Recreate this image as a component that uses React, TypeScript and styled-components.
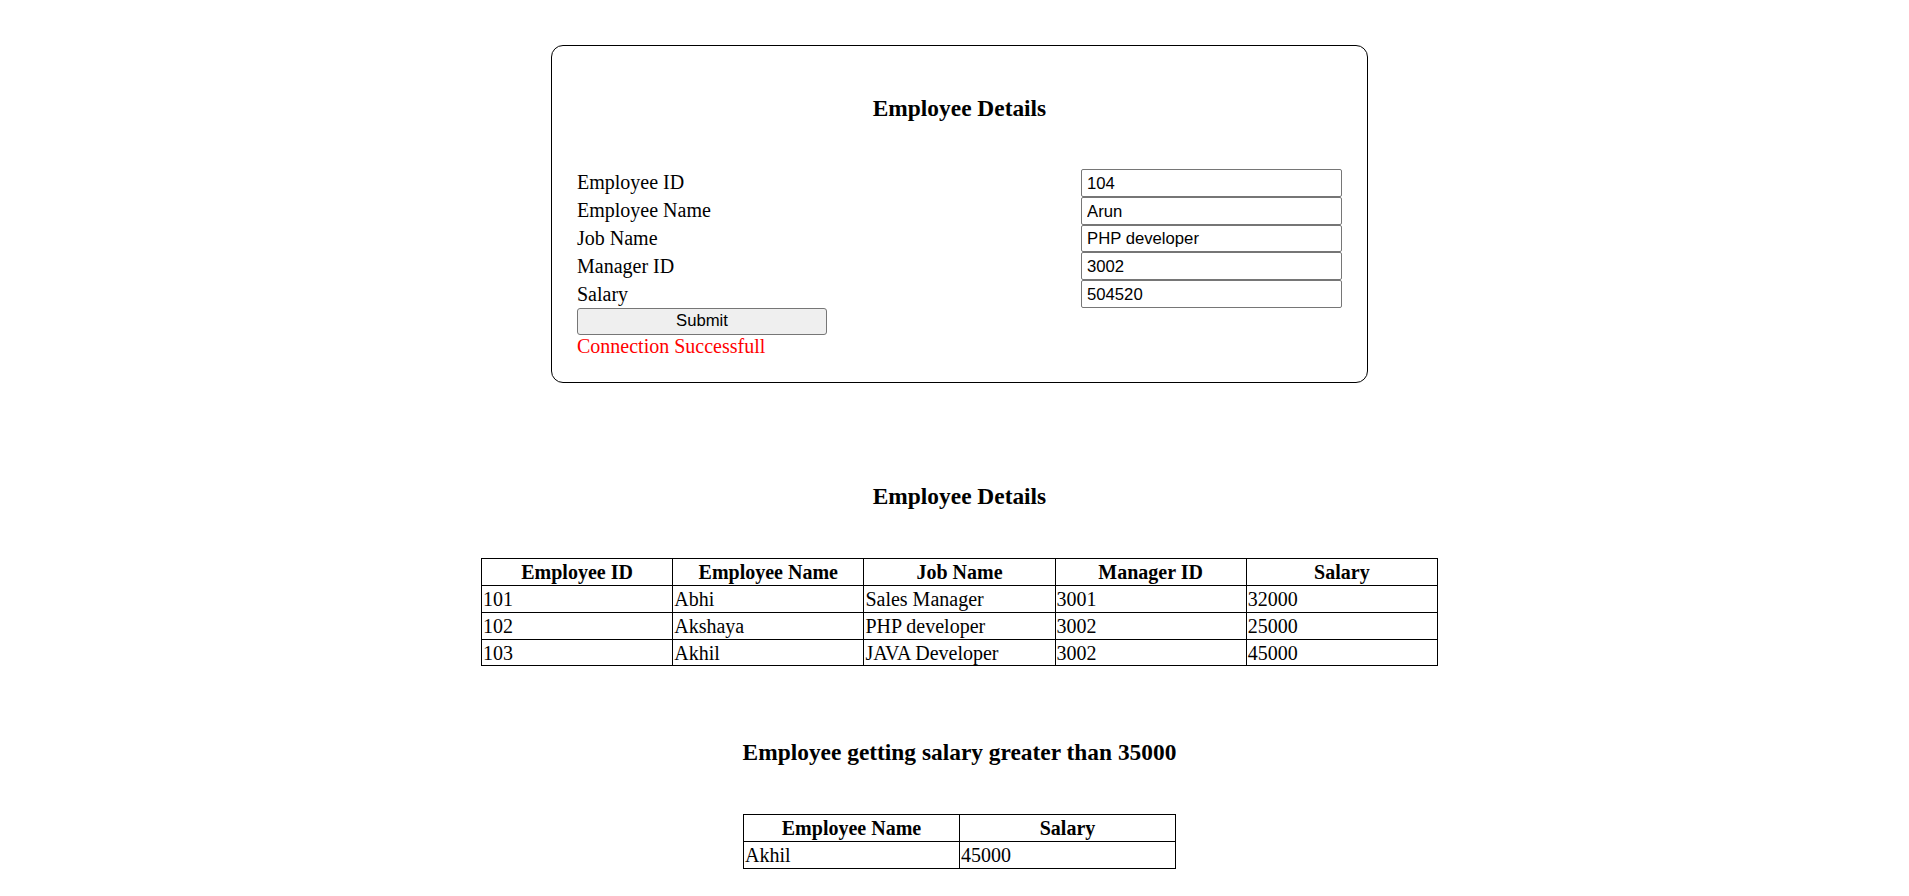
import styled, { createGlobalStyle } from "styled-components";

const GlobalStyle = createGlobalStyle`
  body {
    margin: 0;
    background: #ffffff;
    color: #000000;
    font-family: "Liberation Serif", "Times New Roman", serif;
    font-size: 20px;
  }
`;

const Page = styled.div`
  padding: 45px 0 20px 10px;
  display: flex;
  flex-direction: column;
  align-items: center;
`;

const Card = styled.form`
  box-sizing: border-box;
  width: 817px;
  border: 1px solid #000;
  border-radius: 12px;
  padding: 25px 25px 24px;
`;

const Heading = styled.h3<{ $top: number; $bottom: number }>`
  margin: ${(p) => p.$top}px 0 ${(p) => p.$bottom}px;
  font-size: 23.4px;
  line-height: 27px;
  font-weight: bold;
  text-align: center;
`;

const FieldGrid = styled.div`
  display: grid;
  grid-template-columns: 1fr 261px;
  align-items: center;
`;

const Label = styled.label`
  line-height: 23px;
`;

const Input = styled.input`
  box-sizing: border-box;
  width: 261px;
  height: 27.8px;
  margin: 0;
  padding: 2px 4px 0 5px;
  border: 1px solid #767676;
  border-radius: 2px;
  font-family: "Liberation Sans", Arial, sans-serif;
  font-size: 16.7px;
  color: #000;
  background: #fff;
`;

const SubmitButton = styled.button`
  box-sizing: border-box;
  width: 250px;
  height: 27px;
  margin: 0;
  padding: 0;
  background: #efefef;
  border: 1px solid #767676;
  border-radius: 3px;
  font-family: "Liberation Sans", Arial, sans-serif;
  font-size: 16.7px;
  color: #000;
`;

const Message = styled.div`
  color: #ff0000;
  line-height: 23.5px;
`;

const Table = styled.table<{ $width: number }>`
  width: ${(p) => p.$width}px;
  table-layout: fixed;
  border-collapse: collapse;
  font-size: 20px;
`;

const Th = styled.th`
  border: 1px solid #000;
  padding: 2px 1px 0;
  line-height: 23.7px;
  font-weight: bold;
  text-align: center;
`;

const Td = styled.td`
  border: 1px solid #000;
  padding: 2px 1px 0;
  line-height: 23.7px;
  text-align: left;
`;

const fields = [
  { label: "Employee ID", value: "104" },
  { label: "Employee Name", value: "Arun" },
  { label: "Job Name", value: "PHP developer" },
  { label: "Manager ID", value: "3002" },
  { label: "Salary", value: "504520" },
];

const employees = [
  ["101", "Abhi", "Sales Manager", "3001", "32000"],
  ["102", "Akshaya", "PHP developer", "3002", "25000"],
  ["103", "Akhil", "JAVA Developer", "3002", "45000"],
];

const columns = ["Employee ID", "Employee Name", "Job Name", "Manager ID", "Salary"];

const App = () => {
  const highEarners = employees.filter((e) => Number(e[4]) > 35000);

  return (
    <Page>
      <GlobalStyle />
      <Card onSubmit={(e) => e.preventDefault()}>
        <Heading $top={24} $bottom={47}>
          Employee Details
        </Heading>
        <FieldGrid>
          {fields.map((f) => (
            <>
              <Label key={f.label + "l"}>{f.label}</Label>
              <Input key={f.label + "i"} defaultValue={f.value} />
            </>
          ))}
        </FieldGrid>
        <SubmitButton type="submit">Submit</SubmitButton>
        <Message>Connection Successfull</Message>
      </Card>

      <Heading $top={100} $bottom={48}>
        Employee Details
      </Heading>
      <Table $width={957}>
        <thead>
          <tr>
            {columns.map((c) => (
              <Th key={c}>{c}</Th>
            ))}
          </tr>
        </thead>
        <tbody>
          {employees.map((row) => (
            <tr key={row[0]}>
              {row.map((cell, i) => (
                <Td key={i}>{cell}</Td>
              ))}
            </tr>
          ))}
        </tbody>
      </Table>

      <Heading $top={73} $bottom={48}>
        Employee getting salary greater than 35000
      </Heading>
      <Table $width={433}>
        <thead>
          <tr>
            <Th>Employee Name</Th>
            <Th>Salary</Th>
          </tr>
        </thead>
        <tbody>
          {highEarners.map((row) => (
            <tr key={row[0]}>
              <Td>{row[1]}</Td>
              <Td>{row[4]}</Td>
            </tr>
          ))}
        </tbody>
      </Table>
    </Page>
  );
};

export default App;
